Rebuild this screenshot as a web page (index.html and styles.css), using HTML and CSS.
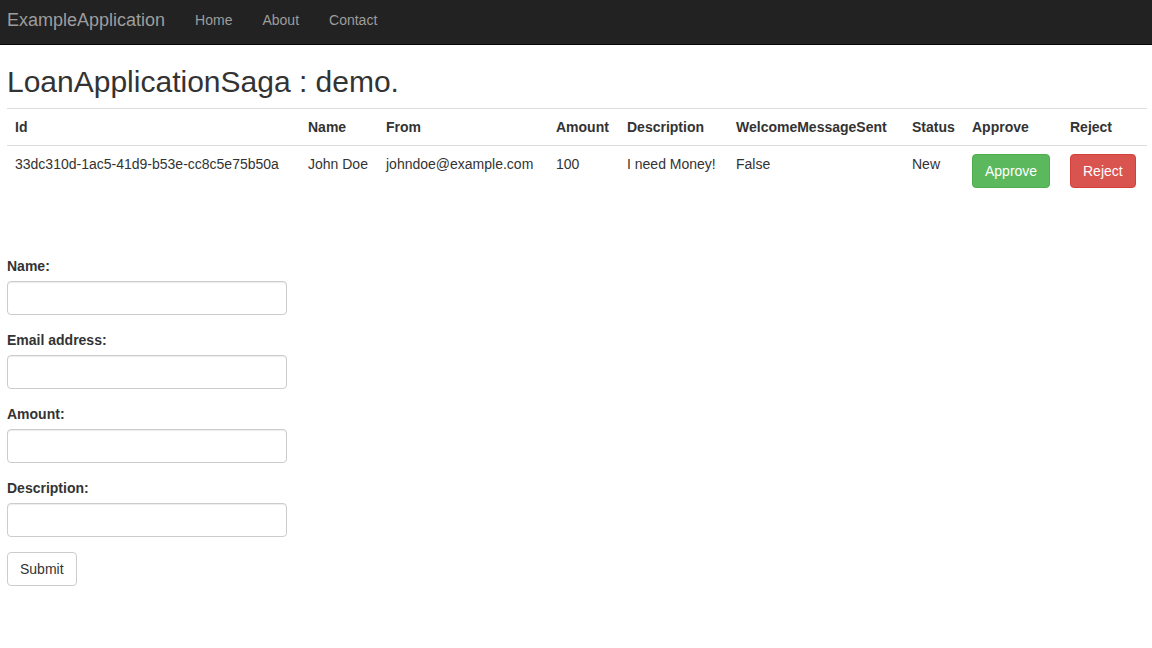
FILE: index.html
```html
<!DOCTYPE html>
<html lang="en">
<head>
<meta charset="utf-8">
<title>LoanApplicationSaga : demo.</title>
<link rel="stylesheet" href="styles.css">
</head>
<body>
<nav class="navbar">
  <a class="brand" href="#">ExampleApplication</a>
  <ul class="nav">
    <li><a href="#">Home</a></li>
    <li><a href="#">About</a></li>
    <li><a href="#">Contact</a></li>
  </ul>
</nav>
<main class="content">
  <h2 class="title">LoanApplicationSaga : demo.</h2>
  <table class="table">
    <colgroup>
      <col class="c-id"><col class="c-name"><col class="c-from"><col class="c-amount"><col class="c-desc"><col class="c-welcome"><col class="c-status"><col class="c-approve"><col class="c-reject">
    </colgroup>
    <tbody>
      <tr>
        <th>Id</th><th>Name</th><th>From</th><th>Amount</th><th>Description</th><th>WelcomeMessageSent</th><th>Status</th><th>Approve</th><th>Reject</th>
      </tr>
      <tr>
        <td>33dc310d-1ac5-41d9-b53e-cc8c5e75b50a</td>
        <td>John Doe</td>
        <td>johndoe@example.com</td>
        <td>100</td>
        <td>I need Money!</td>
        <td>False</td>
        <td>New</td>
        <td><button class="btn btn-success" type="button">Approve</button></td>
        <td><button class="btn btn-danger" type="button">Reject</button></td>
      </tr>
    </tbody>
  </table>
  <form class="form">
    <div class="form-group">
      <label for="name">Name:</label>
      <input id="name" class="form-control" type="text">
    </div>
    <div class="form-group">
      <label for="email">Email address:</label>
      <input id="email" class="form-control" type="email">
    </div>
    <div class="form-group">
      <label for="amount">Amount:</label>
      <input id="amount" class="form-control" type="text">
    </div>
    <div class="form-group">
      <label for="desc">Description:</label>
      <input id="desc" class="form-control" type="text">
    </div>
    <button class="btn btn-default" type="submit">Submit</button>
  </form>
</main>
</body>
</html>
```
FILE: styles.css
```css
* { box-sizing: border-box; }
html, body { margin: 0; padding: 0; }
body {
  font-family: "Liberation Sans", Arial, Helvetica, sans-serif;
  font-size: 14px;
  line-height: 20px;
  color: #333;
  background: #fff;
}
.navbar {
  height: 45px;
  background: #222;
  border-bottom: 1px solid #080808;
  display: flex;
  align-items: flex-start;
}
.brand {
  display: block;
  padding: 10px 15px 10px 7px;
  font-size: 18px;
  line-height: 20px;
  color: #9d9d9d;
  text-decoration: none;
}
.nav {
  list-style: none;
  margin: 0;
  padding: 0;
  display: flex;
}
.nav a {
  display: block;
  padding: 10px 15px;
  line-height: 20px;
  color: #9d9d9d;
  text-decoration: none;
}
.content {
  padding: 0 5px 0 7px;
}
.title {
  margin: 20px 0 10px;
  font-size: 30px;
  font-weight: 500;
  line-height: 33px;
}
.table {
  width: 100%;
  border-collapse: collapse;
  border-spacing: 0;
  table-layout: fixed;
  margin-bottom: 20px;
}
.table th, .table td {
  padding: 8px;
  text-align: left;
  vertical-align: top;
  border-top: 1px solid #ddd;
  line-height: 20px;
  white-space: nowrap;
}
.table th { font-weight: bold; }
.c-id { width: 293px; }
.c-name { width: 78px; }
.c-from { width: 170px; }
.c-amount { width: 71px; }
.c-desc { width: 109px; }
.c-welcome { width: 176px; }
.c-status { width: 60px; }
.c-approve { width: 98px; }
.c-reject { width: auto; }
.btn {
  display: inline-block;
  padding: 6px 12px;
  font-family: inherit;
  font-size: 14px;
  line-height: 20px;
  border: 1px solid transparent;
  border-radius: 4px;
  cursor: pointer;
  margin: 0;
}
.btn-success { color: #fff; background: #5cb85c; border-color: #4cae4c; }
.btn-danger { color: #fff; background: #d9534f; border-color: #d43f3a; }
.btn-default { color: #333; background: #fff; border-color: #ccc; }
.form {
  margin-top: 60px;
}
.form-group {
  margin-bottom: 15px;
}
.form-group label {
  display: block;
  font-weight: bold;
  margin-bottom: 5px;
  line-height: 20px;
}
.form-control {
  display: block;
  width: 280px;
  height: 34px;
  padding: 6px 12px;
  font-family: inherit;
  font-size: 14px;
  color: #555;
  background: #fff;
  border: 1px solid #ccc;
  border-radius: 4px;
  box-shadow: inset 0 1px 1px rgba(0,0,0,.075);
  margin: 0;
}
```
